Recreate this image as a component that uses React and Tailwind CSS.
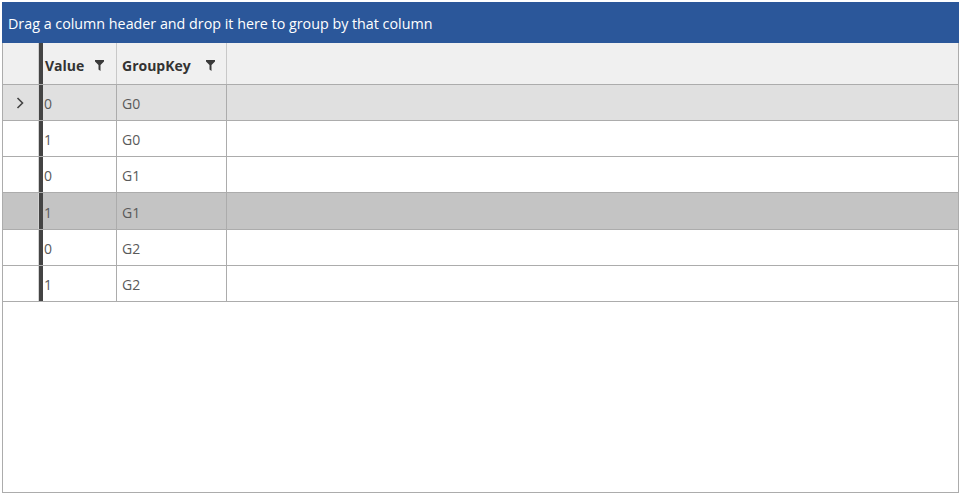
import React from 'react';

const rows = [
  { value: '0', key: 'G0', current: true },
  { value: '1', key: 'G0' },
  { value: '0', key: 'G1' },
  { value: '1', key: 'G1', selected: true },
  { value: '0', key: 'G2' },
  { value: '1', key: 'G2' },
];

const FilterIcon = () => (
  <svg width="9" height="11" viewBox="0 0 9 11" className="shrink-0">
    <path d="M0 0 H9 V1.5 L5.5 5 V11 L3.5 9.5 V5 L0 1.5 Z" fill="#3a3a3a" />
  </svg>
);

const Chevron = () => (
  <svg width="8" height="12" viewBox="0 0 8 12">
    <path d="M1.5 1 L6.5 6 L1.5 11" fill="none" stroke="#444" strokeWidth="1.6" />
  </svg>
);

export default function App() {
  return (
    <div className="pt-[2px] pl-[2px] bg-white" style={{ fontFamily: '"Open Sans", "Noto Sans", sans-serif' }}>
      <div className="w-[957px] h-[491px] flex flex-col">
        {/* group panel */}
        <div className="h-[41px] bg-[#2b579a] text-white text-[14.3px] flex items-center pl-[6px] pt-[2px]">
          Drag a column header and drop it here to group by that column
        </div>

        <div className="flex-1 border-x border-b border-[#acacac] flex flex-col">
          {/* header row */}
          <div className="flex h-[42px] bg-[#f0f0f0] border-b border-[#acacac] text-[14px] font-bold text-[#333]">
            <div className="w-[36px] border-r border-[#d0d0d0]" />
            <div className="w-[4px] bg-[#444]" />
            <div className="w-[74px] border-r border-[#c8c8c8] flex items-center pl-[2px] pr-[12px] pt-[3px] justify-between">
              <span>Value</span>
              <FilterIcon />
            </div>
            <div className="w-[110px] border-r border-[#c8c8c8] flex items-center pl-[5px] pr-[11px] pt-[3px] justify-between">
              <span>GroupKey</span>
              <FilterIcon />
            </div>
            <div className="flex-1" />
          </div>

          {rows.map((r, i) => (
            <div
              key={i}
              className={`flex ${i === 3 ? 'h-[37px]' : 'h-[36px]'} border-b border-[#acacac] text-[14px] text-[#5a5a5a] ${
                r.selected ? 'bg-[#c4c4c4]' : r.current ? 'bg-[#e0e0e0]' : 'bg-white'
              }`}
            >
              <div className="w-[36px] border-r border-[#d4d4d4] flex items-center justify-center pr-[1px]">
                {r.current && <Chevron />}
              </div>
              <div className="w-[4px] bg-[#444]" />
              <div className="w-[74px] border-r border-[#acacac] flex items-center pl-[1px] pt-[2px]">{r.value}</div>
              <div className="w-[110px] border-r border-[#acacac] flex items-center pl-[5px] pt-[2px]">{r.key}</div>
              <div className="flex-1" />
            </div>
          ))}

          <div className="flex-1" />
        </div>
      </div>
    </div>
  );
}
